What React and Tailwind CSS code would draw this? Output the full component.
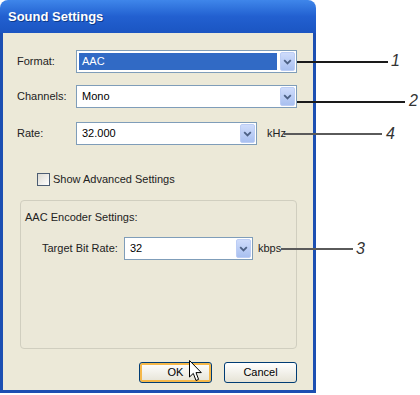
import React from "react";

const Chevron = () => (
  <svg width="9" height="6" viewBox="0 0 9 6">
    <path d="M1.2 1.2 L4.5 4.4 L7.8 1.2" fill="none" stroke="#4d6185" strokeWidth="1.8" />
  </svg>
);

const DropButton = () => (
  <div className="flex w-[15px] items-center justify-center rounded-[2px] border border-[#bccdf5] bg-gradient-to-b from-[#cfdcfb] to-[#a9c0f0]">
    <Chevron />
  </div>
);

const Combo = ({ value, width, selected }) => (
  <div className={`flex h-[23px] items-stretch border border-[#7f9db9] bg-white p-px ${width}`}>
    {selected ? (
      <div className="my-px ml-px mr-[3px] flex flex-1 items-center bg-[#316ac5] pl-[3px] text-white">{value}</div>
    ) : (
      <div className="flex flex-1 items-center pl-[4px] text-black">{value}</div>
    )}
    <DropButton />
  </div>
);

const Line = ({ className }) => <div className={`absolute ${className}`} />;

const Num = ({ children, className }) => (
  <span className={`absolute text-[16px] italic leading-none text-[#333] ${className}`}>{children}</span>
);

const App = () => {
  return (
    <div className="relative h-[395px] w-[420px] overflow-hidden bg-white font-['Liberation_Sans',Arial,sans-serif] text-[11px] leading-[13px] text-[#222]">
      <div className="flex w-[316px] flex-col">
        {/* title bar */}
        <div className="flex h-[33px] items-center rounded-t-[8px] bg-gradient-to-b from-[#3f86ea] via-[#2260d0] to-[#1b55c2] pl-[8px]">
          <span className="text-[13px] font-bold leading-none text-white [text-shadow:1px_1px_0_#0d3a8a]">Sound Settings</span>
        </div>

        {/* body */}
        <div className="flex h-[360px] flex-col border-x-[3px] border-b-[3px] border-[#1c4fb2] bg-[#ece9d8] pl-[14px]">
          <div className="mt-[17px] flex items-center">
            <span className="w-[59px]">Format:</span>
            <Combo value="AAC" width="w-[221px]" selected />
          </div>
          <div className="mt-[12px] flex items-center">
            <span className="w-[59px]">Channels:</span>
            <Combo value="Mono" width="w-[221px]" />
          </div>
          <div className="mt-[14px] flex items-center">
            <span className="w-[59px]">Rate:</span>
            <Combo value="32.000" width="w-[181px]" />
            <span className="ml-[10px]">kHz</span>
          </div>

          <div className="ml-[20px] mt-[28px] flex items-center">
            <div className="h-[13px] w-[13px] border border-[#4c5d73] bg-gradient-to-br from-[#dcdad2] to-white" />
            <span className="ml-[3px]">Show Advanced Settings</span>
          </div>

          <div className="ml-[3px] mt-[14px] flex h-[149px] w-[277px] flex-col rounded-[4px] border border-[#d0cebf] bg-[#ebe8d8] pl-[4px]">
            <span className="mt-[10px]">AAC Encoder Settings:</span>
            <div className="ml-[17px] mt-[13px] flex items-center">
              <span className="w-[82px]">Target Bit Rate:</span>
              <Combo value="32" width="w-[129px]" />
              <span className="ml-[5px]">kbps</span>
            </div>
          </div>

          <div className="mt-[13px] flex justify-end gap-[12px] pr-[16px]">
            <button className="flex h-[21px] w-[73px] items-center justify-center rounded-[3px] border border-[#003c74] bg-gradient-to-b from-white to-[#e6e3d6] text-black shadow-[inset_0_0_0_2px_#f5b84a]">
              OK
            </button>
            <button className="flex h-[21px] w-[73px] items-center justify-center rounded-[3px] border border-[#003c74] bg-gradient-to-b from-white to-[#e6e3d6] text-black">
              Cancel
            </button>
          </div>
        </div>
      </div>

      {/* mouse cursor */}
      <svg className="absolute left-[189px] top-[360px]" width="14" height="23" viewBox="0 0 14 23">
        <path d="M0.5 0.5 L0.5 17 L4.3 13.4 L7 20.5 L9.6 19.4 L7 12.6 L12.3 12.6 Z" fill="white" stroke="black" strokeWidth="1" />
      </svg>

      {/* callouts */}
      <Line className="left-[297px] top-[61px] h-[1.5px] w-[91px] bg-[#1a1a1a]" />
      <Num className="left-[391px] top-[53px]">1</Num>
      <Line className="left-[297px] top-[101px] h-[1.5px] w-[108px] bg-[#1a1a1a]" />
      <Num className="left-[409px] top-[93px]">2</Num>
      <Line className="left-[284px] top-[133px] h-[2px] w-[98px] bg-[#5a5a5a]" />
      <Num className="left-[386px] top-[126px]">4</Num>
      <Line className="left-[281px] top-[248px] h-[2px] w-[72px] bg-[#5a5a5a]" />
      <Num className="left-[356px] top-[241px]">3</Num>
    </div>
  );
};

export default App;
